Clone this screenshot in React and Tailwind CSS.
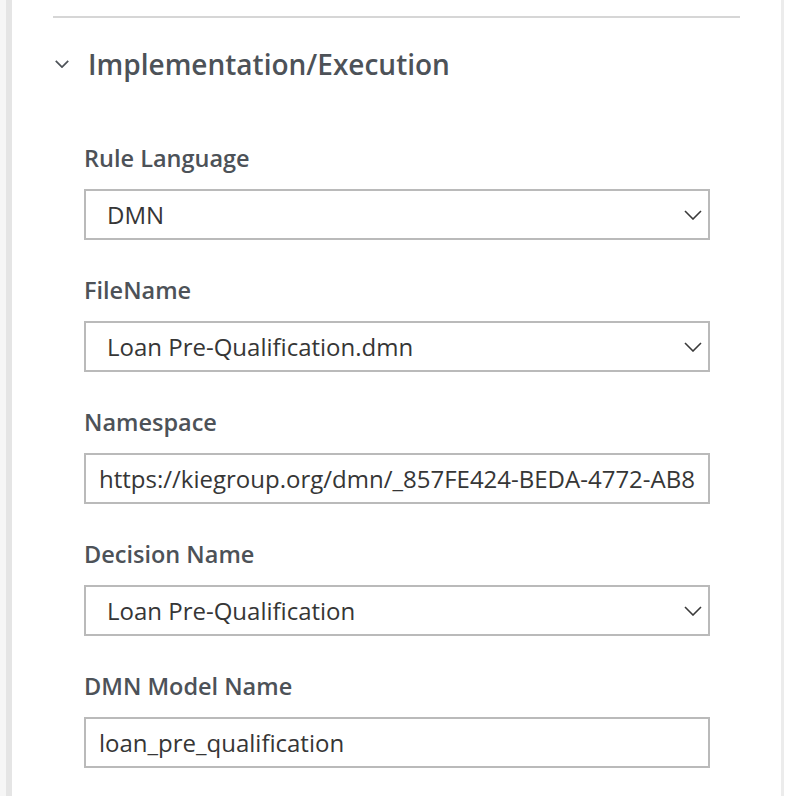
import { useState } from "react";

const Chevron = ({ className }) => (
  <svg viewBox="0 0 18 10" className={className} fill="none">
    <path d="M1 1l8 8 8-8" stroke="currentColor" strokeWidth="1.6" />
  </svg>
);

const SelectField = ({ label, value, options }) => {
  const [val, setVal] = useState(value);
  return (
    <div className="flex flex-col">
      <label className="text-[23.5px] leading-[30px] font-semibold text-[#4d5258]">
        {label}
      </label>
      <div className="relative mt-[16px]">
        <select
          value={val}
          onChange={(e) => setVal(e.target.value)}
          className="w-full h-[51px] appearance-none bg-white border-2 border-[#bababa] pl-[21px] pr-10 text-[24px] text-[#363636] outline-none"
        >
          {options.map((o) => (
            <option key={o}>{o}</option>
          ))}
        </select>
        <Chevron className="absolute right-[8px] top-[21px] w-[18px] h-[10px] text-[#3a3a3a] pointer-events-none" />
      </div>
    </div>
  );
};

const TextField = ({ label, value }) => {
  const [val, setVal] = useState(value);
  return (
    <div className="flex flex-col">
      <label className="text-[23.5px] leading-[30px] font-semibold text-[#4d5258]">
        {label}
      </label>
      <input
        type="text"
        value={val}
        onChange={(e) => setVal(e.target.value)}
        className="mt-[16px] w-full h-[51px] bg-white border-2 border-[#bababa] px-[13px] text-[24px] text-[#363636] outline-none"
      />
    </div>
  );
};

export default function App() {
  return (
    <div
      className="w-[786px] h-[796px] bg-white flex overflow-hidden"
      style={{ fontFamily: '"Open Sans", "Liberation Sans", sans-serif' }}
    >
      <div className="w-[6px] bg-[#f6f6f6]" />
      <div className="w-[6px] bg-[#e5e5e5]" />

      <div className="flex-1 flex flex-col">
        {/* divider */}
        <div className="mt-[16px] ml-[41px] w-[687px] h-[2px] bg-[#d6d6d6]" />

        {/* section header */}
        <div className="mt-[28px] flex items-center h-[36px]">
          <Chevron className="ml-[43px] w-[14px] h-[8px] text-[#4d5258] [&_path]:stroke-[2.2]" />
          <h2 className="ml-[19px] text-[28px] leading-[36px] font-semibold text-[#4d5258]">
            Implementation/Execution
          </h2>
        </div>

        {/* fields */}
        <div className="mt-[61px] ml-[72px] w-[626px] flex flex-col gap-[35px]">
          <SelectField label="Rule Language" value="DMN" options={["DMN", "DRL"]} />
          <SelectField
            label="FileName"
            value="Loan Pre-Qualification.dmn"
            options={["Loan Pre-Qualification.dmn"]}
          />
          <TextField
            label="Namespace"
            value="https://kiegroup.org/dmn/_857FE424-BEDA-4772-AB8"
          />
          <SelectField
            label="Decision Name"
            value="Loan Pre-Qualification"
            options={["Loan Pre-Qualification"]}
          />
          <TextField label="DMN Model Name" value="loan_pre_qualification" />
        </div>
      </div>

      <div className="w-[3px] bg-[#ececec]" />
      <div className="w-[2px] bg-white" />
    </div>
  );
}
